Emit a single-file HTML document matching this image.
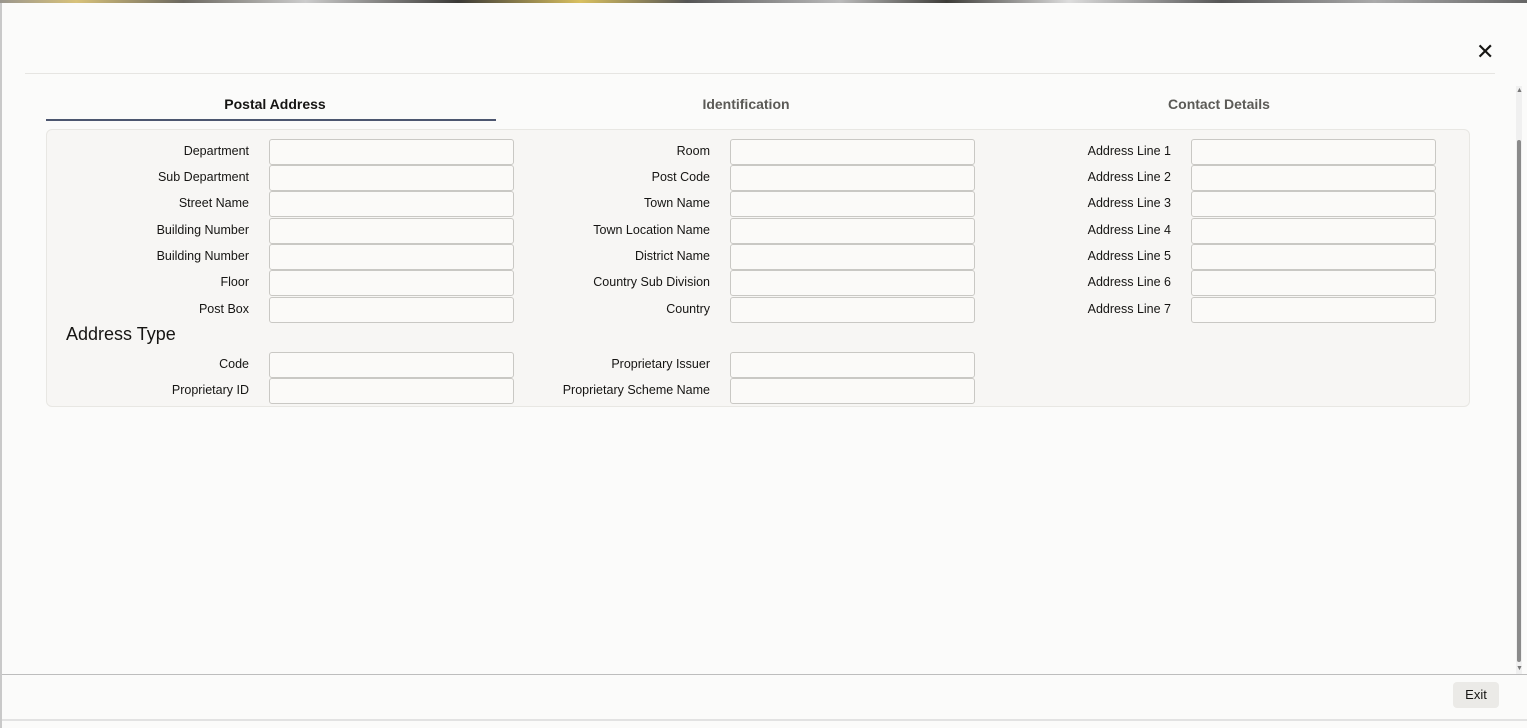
<!DOCTYPE html>
<html><head><style>
body{margin:0;width:1527px;height:728px;background:#fbfbfa;font-family:"Liberation Sans",sans-serif;position:relative;overflow:hidden;color:#161513}
.a{position:absolute}
.lbl{position:absolute;font-size:12.5px;text-align:right;width:220px;line-height:25px}
.in{position:absolute;width:243px;height:24px;border:1px solid #c9c8c4;border-radius:3px;background:#fbfaf8}
.tab{position:absolute;top:96px;font-size:14px;font-weight:bold;color:#5b5a56;transform:translateX(-50%)}
</style></head><body>
<div class="a" style="left:0;top:0;width:1527px;height:3px;background:linear-gradient(90deg,#9a968e,#d8c27a 5%,#6b6860 12%,#ccc 20%,#3a3936 30%,#d9c060 38%,#555 45%,#bbb 55%,#3d3c38 62%,#ddd 70%,#555 80%,#aaa 90%,#666)"></div>
<div class="a" style="left:0;top:3px;width:2px;height:725px;background:#c9c9c9"></div>
<div class="a" style="left:25px;top:73px;width:1470px;height:1px;background:#e6e5e2"></div>
<div class="a" style="left:1476px;top:40px;font-size:22px;line-height:24px;color:#161513">✕</div>
<div class="tab" style="left:275px;color:#161513">Postal Address</div>
<div class="tab" style="left:746px">Identification</div>
<div class="tab" style="left:1219px">Contact Details</div>
<div class="a" style="left:46px;top:119px;width:450px;height:2px;background:#4c566f"></div>
<div class="a" style="left:46px;top:129px;width:1422px;height:276px;border:1px solid #e8e7e3;border-radius:6px;background:#f7f6f4"></div>
<div class="a" style="left:66px;top:324px;font-size:18px">Address Type</div>
<div id="f"></div>
<div class="a" style="left:1516px;top:86px;width:6px;height:588px;background:#f0f0f0"></div>
<div class="a" style="left:1517px;top:140px;width:4px;height:522px;background:#8a8a8a;border-radius:2px"></div>
<div class="a" style="left:1516px;top:87px;font-size:7px;color:#777">▲</div>
<div class="a" style="left:1516px;top:665px;font-size:7px;color:#777">▼</div>
<div class="a" style="left:2px;top:674px;width:1525px;height:1px;background:#bdbdbd"></div>
<div class="a" style="left:1453px;top:682px;width:46px;height:26px;background:#ebeae7;border-radius:4px;font-size:13px;line-height:26px;text-align:center">Exit</div>
<div class="a" style="left:2px;top:719px;width:1525px;height:2px;background:#e2e2e2"></div>
<script>
var cols=[[249,269,["Department","Sub Department","Street Name","Building Number","Building Number","Floor","Post Box"]],
[710,730,["Room","Post Code","Town Name","Town Location Name","District Name","Country Sub Division","Country"]],
[1171,1191,["Address Line 1","Address Line 2","Address Line 3","Address Line 4","Address Line 5","Address Line 6","Address Line 7"]]];
var ys=[139,165,191,218,244,270,297],h="";
cols.forEach(function(c){c[2].forEach(function(t,i){h+='<div class="lbl" style="left:'+(c[0]-220)+'px;top:'+ys[i]+'px">'+t+'</div><div class="in" style="left:'+c[1]+'px;top:'+ys[i]+'px"></div>';});});
[[249,269,["Code","Proprietary ID"]],[710,730,["Proprietary Issuer","Proprietary Scheme Name"]]].forEach(function(c){c[2].forEach(function(t,i){var y=[352,378][i];h+='<div class="lbl" style="left:'+(c[0]-220)+'px;top:'+y+'px">'+t+'</div><div class="in" style="left:'+c[1]+'px;top:'+y+'px"></div>';});});
document.getElementById("f").innerHTML=h;
</script>
</body></html>
